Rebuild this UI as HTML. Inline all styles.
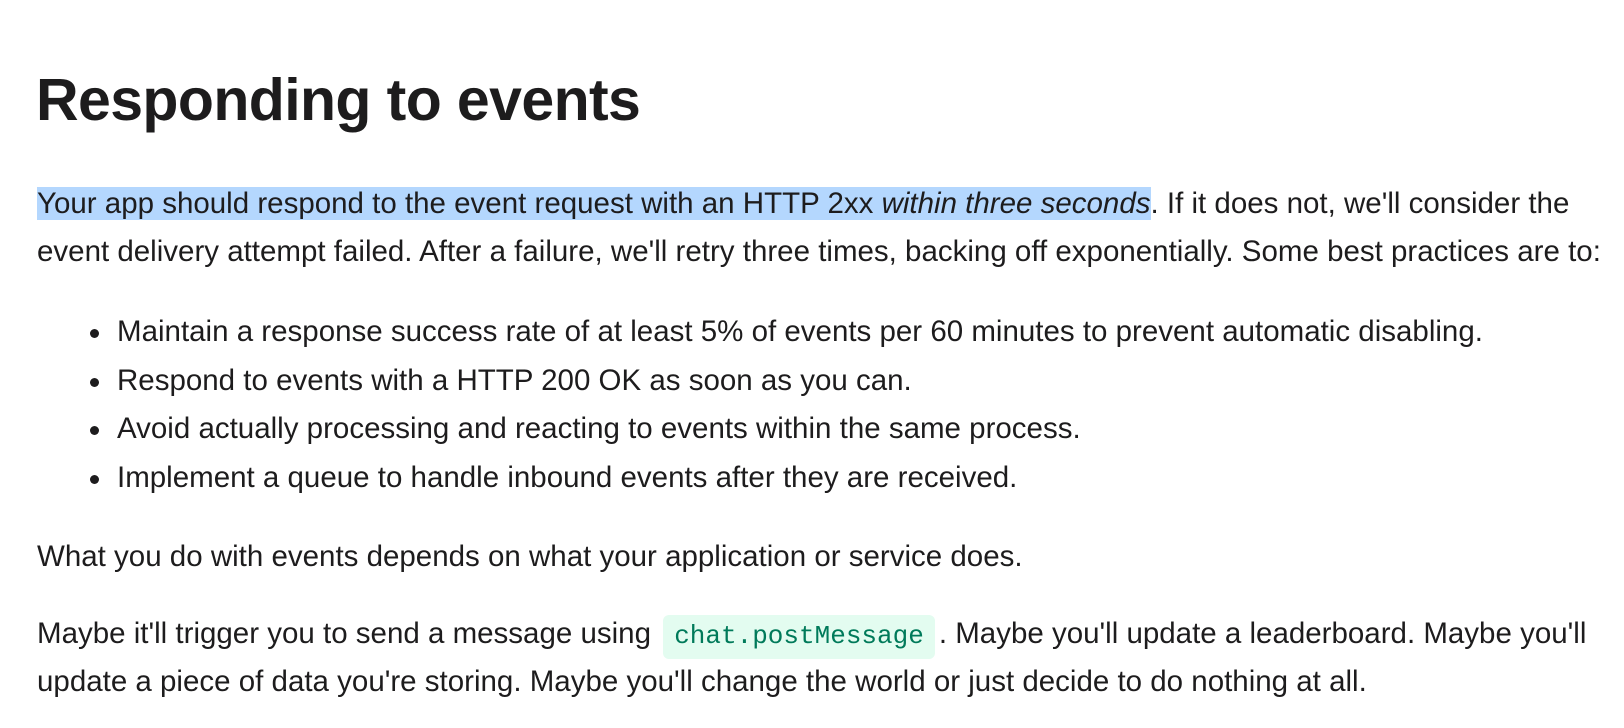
<!DOCTYPE html>
<html><head><meta charset="utf-8"><style>
html,body{margin:0;padding:0;background:#fff;width:1624px;height:728px;overflow:hidden}
body{font-family:"Liberation Sans",Arial,sans-serif;color:#1d1c1d;position:relative}
.l{position:absolute;white-space:nowrap;font-size:29.5px;line-height:36px;left:37px}
h1{position:absolute;left:36px;top:65px;margin:0;font-size:59px;font-weight:bold;letter-spacing:-0.6px;line-height:70px;white-space:nowrap}
.hl{background:#b4d7fe}
.b{left:117px}
.b:before{content:"";position:absolute;left:-27px;top:15px;width:9px;height:9px;border-radius:50%;background:#1d1c1d}
code{font-family:"Liberation Mono",monospace;font-size:26px;color:#007a5a;background:#e3fcf0;border-radius:6px;padding:6px 11px 8px;margin:0 4px}
</style></head><body>
<h1>Responding to events</h1>
<div class="l" style="top:186px"><span class="hl">Your app should respond to the event request with an HTTP 2xx <i>within three seconds</i></span>. If it does not, we'll consider the</div>
<div class="l" style="top:234px">event delivery attempt failed. After a failure, we'll retry three times, backing off exponentially. Some best practices are to:</div>
<div class="l b" style="top:314px">Maintain a response success rate of at least 5% of events per 60 minutes to prevent automatic disabling.</div>
<div class="l b" style="top:363px">Respond to events with a HTTP 200 OK as soon as you can.</div>
<div class="l b" style="top:411px">Avoid actually processing and reacting to events within the same process.</div>
<div class="l b" style="top:460px">Implement a queue to handle inbound events after they are received.</div>
<div class="l" style="top:539px">What you do with events depends on what your application or service does.</div>
<div class="l" style="top:616px">Maybe it'll trigger you to send a message using <code>chat.postMessage</code>. Maybe you'll update a leaderboard. Maybe you'll</div>
<div class="l" style="top:664px">update a piece of data you're storing. Maybe you'll change the world or just decide to do nothing at all.</div>
</body></html>
